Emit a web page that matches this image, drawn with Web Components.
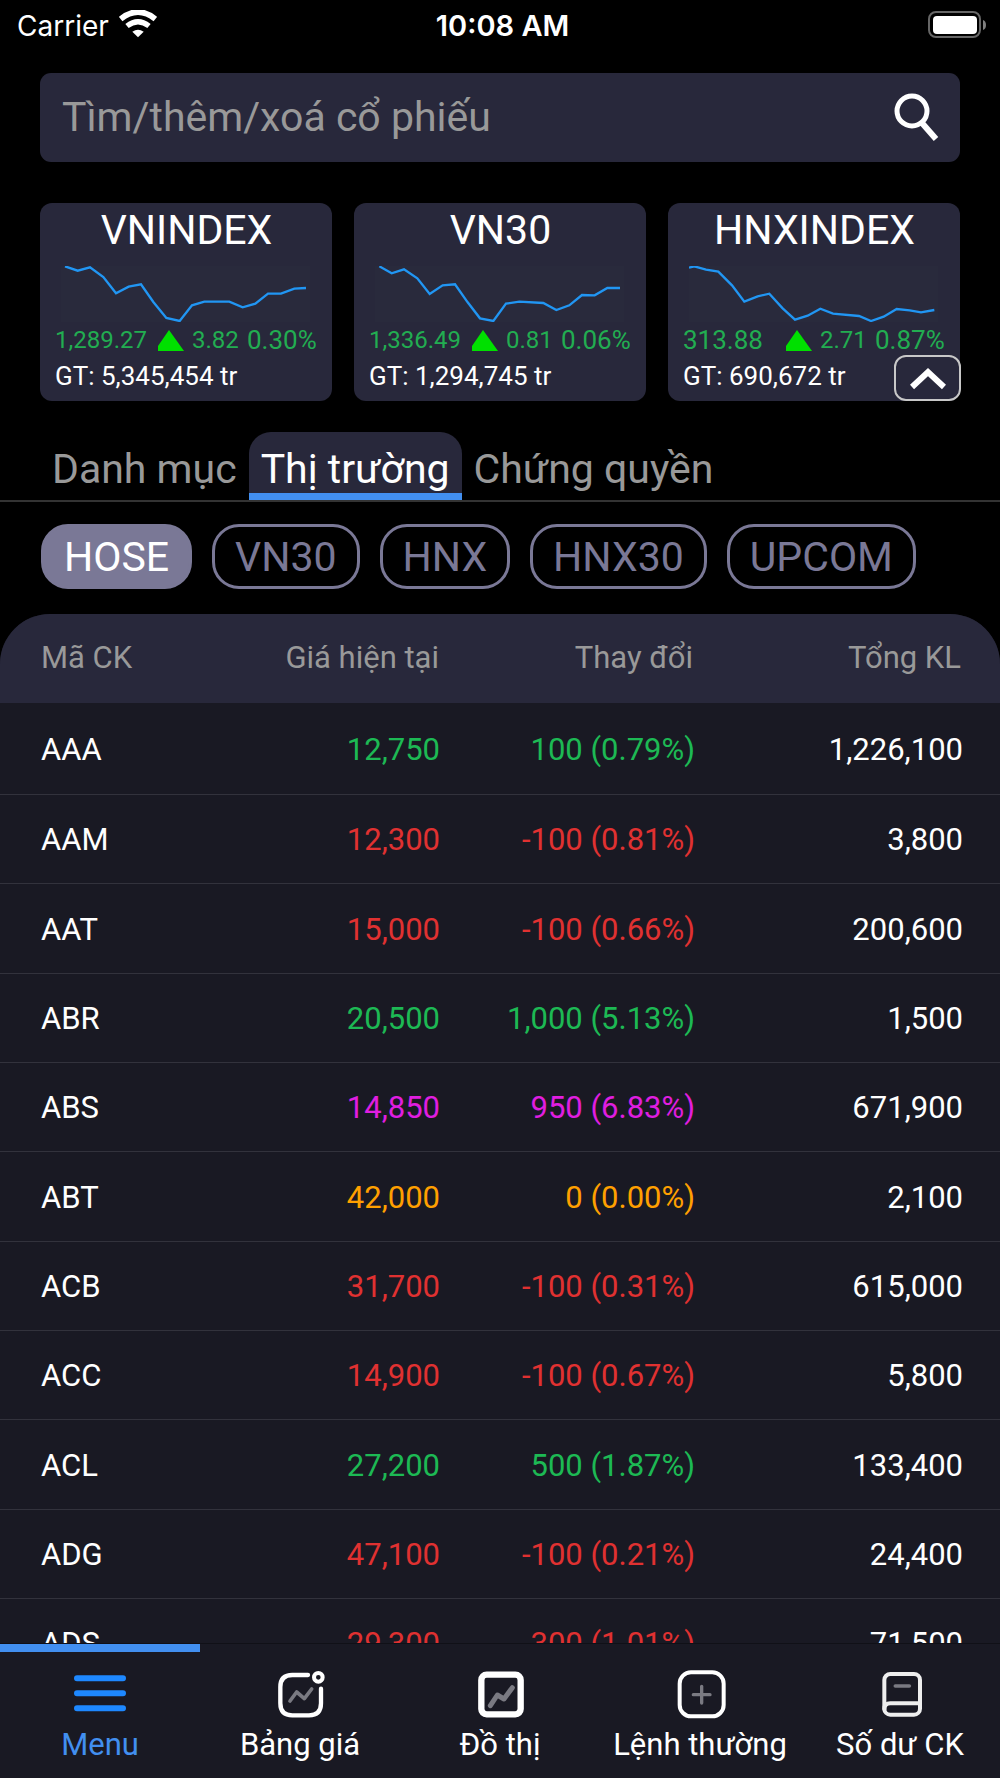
<!DOCTYPE html>
<html lang="vi">
<head>
<meta charset="utf-8">
<meta name="viewport" content="width=device-width, initial-scale=1">
<title>Bảng giá</title>
<style>
    body{
        margin: 0;
        background: #000;
        color: #fff;
        font-family: Roboto, "Noto Sans", sans-serif;
        --panel: #28283b;
        --surface: #191923;
        --blue: #428ff0;
        --muted: #999;
        --violet: #7a7896;
    }
</style>
</head>
<body>
<stock-app></stock-app>

<script>
class BaseElement extends HTMLElement{
    constructor(){
        super();
        this.attachShadow({mode: 'open'});
    }

    connectedCallback(){
        const template = document.createElement('template');
        template.innerHTML = `<style>${this.getStyles()}</style>${this.getTemplate()}`;
        this.shadowRoot.replaceChildren(template.content.cloneNode(true));
    }
}

class StatusBar extends BaseElement{
    getTemplate(){
        return `
        <span class="carrier">Carrier
            <svg width="38" height="28" viewBox="0 0 114 84">
                <g fill="none" stroke="#fff">
                    <path d="M5 27Q57 -15 109 27" stroke-width="17"/>
                    <path d="M24 48Q57 22 90 48" stroke-width="16"/>
                </g>
                <path d="M40 65Q57 53 74 65L57 82Z" fill="#fff"/>
            </svg>
        </span>
        <span class="time">10:08 AM</span>
        <svg class="battery" width="60" height="28" viewBox="0 0 60 28">
            <rect x="1" y="1" width="51" height="25" rx="7" fill="none" stroke="#666" stroke-width="2"/>
            <rect x="5" y="5" width="44" height="18" rx="4" fill="#fff"/>
            <path d="M55 9Q58 10 58 14T55 19Z" fill="#808080"/>
        </svg>`;
    }

    getStyles(){
        return `
            :host{
                display: grid;
                grid-template-columns: 1fr auto 1fr;
                align-items: center;
                height: 51px;
                padding: 0 12px 0 17px;
                font: 28px Inter, "Liberation Sans", sans-serif;
            }
            .carrier{ display: flex; align-items: center; gap: 10px; }
            .carrier svg{ margin-bottom: 3px; }
            .time{ font-size: 29px; font-weight: 600; }
            .battery{ justify-self: end; margin-bottom: 1px; }
        `;
    }
}

class SearchBox extends BaseElement{
    getTemplate(){
        return `
        <input type="text" aria-label="Tìm cổ phiếu" placeholder="Tìm/thêm/xoá cổ phiếu">
        <button aria-label="Tìm">
            <svg width="50" height="54" viewBox="0 0 50 54" fill="none" stroke="#fff" stroke-width="5">
                <circle cx="20" cy="20" r="15"/>
                <path d="M30 32L44 48" stroke-width="6"/>
            </svg>
        </button>`;
    }

    getStyles(){
        return `
            :host{
                display: flex;
                align-items: center;
                height: 89px;
                margin: 22px 40px 0;
                border-radius: 11px;
                background: var(--panel);
            }
            input{
                flex: 1;
                min-width: 0;
                padding: 0 0 1px 22px;
                border: 0;
                outline: 0;
                background: none;
                color: #fff;
                font: 41px/56px Roboto, sans-serif;
            }
            input::placeholder{ color: var(--muted); opacity: 1; }
            button{ display: flex; padding: 0; margin-right: 18px; border: 0; background: none; }
        `;
    }
}

class IndexCard extends BaseElement{
    getTemplate(){
        const wide = this.getAttribute('value').length < 8 ? 'wide' : '';
        return `
        <h2>${this.getAttribute('name')}</h2>
        <svg class="chart" viewBox="0 0 747 168" preserveAspectRatio="none">
            <polyline points="${this.getAttribute('points')}"/>
        </svg>
        <div class="numbers">
            <span class="${wide}">${this.getAttribute('value')}</span>
            <svg width="26" height="21" viewBox="0 0 26 21"><path d="M11 0L26 21H0V16Z" fill="#00e000"/></svg>
            <span>${this.getAttribute('change')}</span>
            <span class="wide">${this.getAttribute('percent')}</span>
        </div>
        <p>GT: <slot></slot> tr</p>`;
    }

    getStyles(){
        return `
            :host{
                display: block;
                padding: 3px 14px 6px 15px;
                border-radius: 12px;
                background: var(--panel);
            }
            h2{
                margin: 0 0 12px;
                font-size: 41px;
                line-height: 48px;
                font-weight: 400;
                text-align: center;
            }
            .chart{
                display: block;
                width: calc(100% - 14px);
                height: 56px;
                margin: 0 7px 1px 6px;
                background: #292a3c;
            }
            polyline{ fill: none; stroke: #2196f3; stroke-width: 7; }
            .numbers{
                display: grid;
                grid-template-columns: 103fr 34fr 55fr 71fr;
                align-items: center;
                color: #22ad51;
                font-size: 24px;
                line-height: 34px;
                white-space: nowrap;
            }
            .wide{ font-size: 26px; }
            p{ margin: 0; font-size: 26px; line-height: 38px; }
        `;
    }
}

class IndexList extends BaseElement{
    getTemplate(){
        return `
        <slot></slot>
        <button aria-label="Thu gọn">
            <svg width="36" height="24" viewBox="0 0 36 24" fill="none" stroke="#fff" stroke-width="6">
                <path d="M2 21L18 6L34 21"/>
            </svg>
        </button>`;
    }

    getStyles(){
        return `
            :host{
                position: relative;
                display: grid;
                grid-template-columns: repeat(3, minmax(0, 1fr));
                gap: 22px;
                margin: 41px 40px 0;
            }
            button{
                position: absolute;
                right: -1px;
                bottom: 0;
                display: flex;
                align-items: center;
                justify-content: center;
                width: 67px;
                height: 46px;
                padding: 0;
                border: 2px solid #c8c8c8;
                border-radius: 12px;
                background: var(--panel);
            }
        `;
    }
}

class TabBar extends BaseElement{
    getTemplate(){
        return `<slot></slot>`;
    }

    getStyles(){
        return `
            :host{
                display: flex;
                margin-top: 31px;
                padding: 0 40px;
                border-bottom: 2px solid #333;
            }
        `;
    }
}

class TabItem extends BaseElement{
    getTemplate(){
        return `<button><slot></slot></button>`;
    }

    getStyles(){
        return `
            button{
                display: block;
                padding: 13px 12px 7px;
                border: 0;
                background: none;
                color: var(--muted);
                font: 41px/48px Roboto, sans-serif;
                white-space: nowrap;
            }
            /* the bar is a gradient, so its ends stay straight */
            :host([active]) button{
                border-radius: 22px 22px 0 0;
                color: #fff;
                background: linear-gradient(to top, var(--blue) 7px, var(--panel) 7px);
            }
        `;
    }
}

class ChipItem extends BaseElement{
    getTemplate(){
        return `<button><slot></slot></button>`;
    }

    getStyles(){
        return `
            button{
                display: block;
                height: 65px;
                padding: 0 20px;
                border: 3px solid var(--violet);
                border-radius: 27px;
                background: none;
                color: var(--violet);
                font: 41px/58px Roboto, sans-serif;
            }
            :host([active]) button{ background: var(--violet); color: #fff; }
        `;
    }
}

class ChipBar extends BaseElement{
    getTemplate(){
        return `<slot></slot>`;
    }

    getStyles(){
        return `:host{ display: flex; gap: 20px; padding: 22px 41px 25px; }`;
    }
}

class StockTable extends BaseElement{
    getRows(){
        return [
            ['AAA', '12,750', '100 (0.79%)', '1,226,100', 'up'],
            ['AAM', '12,300', '-100 (0.81%)', '3,800', 'down'],
            ['AAT', '15,000', '-100 (0.66%)', '200,600', 'down'],
            ['ABR', '20,500', '1,000 (5.13%)', '1,500', 'up'],
            ['ABS', '14,850', '950 (6.83%)', '671,900', 'ceil'],
            ['ABT', '42,000', '0 (0.00%)', '2,100', 'same'],
            ['ACB', '31,700', '-100 (0.31%)', '615,000', 'down'],
            ['ACC', '14,900', '-100 (0.67%)', '5,800', 'down'],
            ['ACL', '27,200', '500 (1.87%)', '133,400', 'up'],
            ['ADG', '47,100', '-100 (0.21%)', '24,400', 'down'],
            ['ADS', '29,300', '-300 (1.01%)', '71,500', 'down']
        ];
    }

    getTemplate(){
        const rows = this.getRows().map(([code, price, change, total, trend]) => `
            <tr>
                <td>${code}</td>
                <td class="${trend}">${price}</td>
                <td class="${trend}">${change}</td>
                <td>${total}</td>
            </tr>`).join('');

        return `
        <table>
            <colgroup><col class="code"><col class="price"><col class="change"><col></colgroup>
            <thead>
                <tr><th>Mã CK</th><th>Giá hiện tại</th><th>Thay đổi</th><th>Tổng KL</th></tr>
            </thead>
            <tbody>${rows}</tbody>
        </table>`;
    }

    getStyles(){
        return `
            :host{
                display: block;
                flex: 1;
                min-height: 0;
                overflow: hidden;
                border-radius: 50px 50px 0 0;
                background: var(--surface);
            }
            table{
                width: 100%;
                table-layout: fixed;
                border-spacing: 0;
                font-size: 31px;
                line-height: 40px;
            }
            .code{ width: 20%; }
            .price{ width: 24%; }
            .change{ width: 26%; }
            th, td{ padding: 0 0 0; text-align: right; white-space: nowrap; }
            td{ height: 86px; padding-top: 2px; border-bottom: 1px solid #32323c; }
            th{
                height: 87px;
                padding-bottom: 2px;
                background: var(--panel);
                color: var(--muted);
                font-weight: 400;
            }
            tr:nth-child(3n) td{ height: 87px; }
            tbody tr:first-child td{ height: 89px; }
            th:nth-child(2){ padding-right: 1px; }
            th:nth-child(3){ padding-right: 7px; }
            td:nth-child(3){ padding-right: 5px; }
            th:last-child{ padding-right: 39px; }
            td:last-child{ padding-right: 37px; }
            th:first-child, td:first-child{ padding-left: 41px; text-align: left; }
            .up{ color: #1db954; }
            .down{ color: #e03131; }
            .ceil{ color: #e01ee0; }
            .same{ color: #ffa000; }
        `;
    }
}

class NavBar extends BaseElement{
    getTemplate(){
        return `<nav><slot></slot></nav>`;
    }

    getStyles(){
        return `
            :host{ display: block; border-top: 1px solid #101017; background: var(--surface); }
            nav{ display: grid; grid-template-columns: repeat(5, 1fr); }
        `;
    }
}

class NavItem extends BaseElement{
    getIcon(){
        const icons = {
            menu: `
                <g stroke="#1e88ff" stroke-width="18">
                    <path d="M9 31H147M9 76H147M9 121H147"/>
                </g>`,
            board: `
                <path d="M102 21H55Q19 21 19 57V106Q19 142 55 142H105Q141 142 141 106V62" stroke-width="13"/>
                <circle cx="133" cy="28" r="13" stroke-width="12"/>
                <path class="dim" d="M48 99L68 72L91 92L113 63" stroke-width="11"/>`,
            chart: `
                <rect x="22" y="20" width="118" height="119" rx="16" stroke-width="19"/>
                <path class="dim" d="M49 113L70 81L90 93L115 59" stroke-width="15"/>`,
            order: `
                <rect x="17" y="13" width="132" height="132" rx="34" stroke-width="12"/>
                <path class="dim" d="M58 80H108M83 55V105" stroke-width="10"/>`,
            balance: `
                <g stroke="#eee" stroke-width="12">
                    <rect x="31" y="18" width="107" height="122" rx="18"/>
                    <path d="M31 124Q31 106 49 106H138"/>
                </g>
                <path class="dim" d="M64 54H106" stroke-width="11"/>`
        };
        return icons[this.getAttribute('icon')];
    }

    getTemplate(){
        return `
        <a href="#">
            <svg width="52" height="52" viewBox="0 0 156 156">${this.getIcon()}</svg>
            <slot></slot>
        </a>`;
    }

    getStyles(){
        return `
            a{
                display: flex;
                flex-direction: column;
                align-items: center;
                gap: 7px;
                padding: 24px 0 15px;
                color: #fff;
                font-size: 31px;
                line-height: 36px;
                text-decoration: none;
                white-space: nowrap;
            }
            svg{
                overflow: visible;
                fill: none;
                stroke: #fff;
                stroke-linecap: round;
                stroke-linejoin: round;
            }
            .dim{ stroke: #7a7a82; }
            :host([active]) a{
                padding-top: 16px;
                border-top: 8px solid var(--blue);
                color: var(--blue);
            }
        `;
    }
}

class StockApp extends BaseElement{
    getTemplate(){
        return `
        <status-bar></status-bar>
        <search-box></search-box>
        <index-list>
            <index-card name="VNINDEX" value="1,289.27" change="3.82" percent="0.30%"
                points="12,1 50,14 87,4 127,33 165,82 203,62 240,55 277,108 316,156 356,165 393,118 430,107 505,107 545,124 583,113 621,83 660,83 700,68 735,66">5,345,454</index-card>
            <index-card name="VN30" value="1,336.49" change="0.81" percent="0.06%"
                points="13,1 50,22 87,10 127,37 164,84 203,58 240,55 278,109 315,157 355,165 393,113 433,107 505,111 544,132 583,118 621,87 659,88 697,66 735,66">1,294,745</index-card>
            <index-card name="HNXINDEX" value="313.88" change="2.71" percent="0.87%"
                points="0,5 16,1 51,11 88,17 129,58 166,107 206,91 241,83 281,127 318,161 356,149 394,128 432,143 510,150 546,165 584,152 623,129 662,133 696,139 736,132">690,672</index-card>
        </index-list>
        <tab-bar>
            <tab-item>Danh mục</tab-item>
            <tab-item active>Thị trường</tab-item>
            <tab-item>Chứng quyền</tab-item>
        </tab-bar>
        <chip-bar>
            <chip-item active>HOSE</chip-item>
            <chip-item>VN30</chip-item>
            <chip-item>HNX</chip-item>
            <chip-item>HNX30</chip-item>
            <chip-item>UPCOM</chip-item>
        </chip-bar>
        <stock-table></stock-table>
        <nav-bar>
            <nav-item icon="menu" active>Menu</nav-item>
            <nav-item icon="board">Bảng giá</nav-item>
            <nav-item icon="chart">Đồ thị</nav-item>
            <nav-item icon="order">Lệnh thường</nav-item>
            <nav-item icon="balance">Số dư CK</nav-item>
        </nav-bar>`;
    }

    getStyles(){
        return `
            :host{
                display: flex;
                flex-direction: column;
                height: 100vh;
                overflow: hidden;
            }
        `;
    }
}

customElements.define('status-bar', StatusBar);
customElements.define('search-box', SearchBox);
customElements.define('index-card', IndexCard);
customElements.define('index-list', IndexList);
customElements.define('tab-bar', TabBar);
customElements.define('tab-item', TabItem);
customElements.define('chip-item', ChipItem);
customElements.define('chip-bar', ChipBar);
customElements.define('stock-table', StockTable);
customElements.define('nav-bar', NavBar);
customElements.define('nav-item', NavItem);
customElements.define('stock-app', StockApp);
</script>
</body>
</html>
